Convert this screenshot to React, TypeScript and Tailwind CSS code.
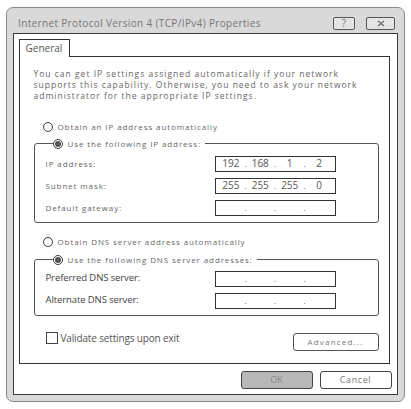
import React from 'react'

const spaced = "font-['Open_Sans','Liberation_Sans',sans-serif]"

// radio button, filled or empty
function Radio({ checked }: { checked?: boolean }) {
  return (
    <span className="flex h-[10px] w-[10px] shrink-0 items-center justify-center rounded-full border border-[#3a3a3a] bg-white">
      {checked && <span className="h-[6px] w-[6px] rounded-full bg-[#555]" />}
    </span>
  )
}

// ip address box with four segments
function IpBox({ parts = ['', '', '', ''] }: { parts?: string[] }) {
  return (
    <div className="flex h-[16px] w-[121px] items-center border border-[#333] bg-white px-[3px] font-['Open_Sans',sans-serif] text-[10px] text-[#555]">
      {parts.map((p, i) => (
        <React.Fragment key={i}>
          {i > 0 && <span className="w-[5px] text-center text-[8px]">.</span>}
          <span className="w-[25px] text-center">{p}</span>
        </React.Fragment>
      ))}
    </div>
  )
}

function Row({ label, parts, plain }: { label: string; parts?: string[]; plain?: boolean }) {
  return (
    <div className="flex h-[16px] items-center justify-between pr-[31px]">
      <span
        className={
          plain
            ? "font-['Open_Sans',sans-serif] text-[9.5px] tracking-[-0.1px] text-[#444]"
            : `${spaced} text-[8px] tracking-[0.9px] text-[#666]`
        }
      >
        {label}
      </span>
      <IpBox parts={parts} />
    </div>
  )
}

export default function App() {
  return (
    <div className="h-[409px] w-[411px] bg-white pl-[6px] pt-[7px]">
      <div className="flex h-[395px] w-[399px] flex-col rounded-[7px] border border-[#8a8a8a] bg-[#d9d9d9] px-[6px] pb-[6px]">
        {/* title bar */}
        <div className="flex h-[25px] shrink-0 items-center justify-between pl-[5px] pr-[3px] pt-[5px]">
          <span className={`${spaced} text-[10px] tracking-[0.35px] text-[#777]`}>
            Internet Protocol Version 4 (TCP/IPv4) Properties
          </span>
          <div className="flex gap-[11px]">
            <span className="flex h-[13px] w-[22px] items-center justify-center rounded-[2px] border border-[#555] bg-[#e4e4e4] font-['Open_Sans',sans-serif] text-[10px] leading-none text-[#777]">
              ?
            </span>
            <span className="flex h-[13px] w-[29px] items-center justify-center rounded-[2px] border border-[#555] bg-[#e4e4e4]">
              <svg width="8" height="7" viewBox="0 0 8 7">
                <path d="M1 1L7 6M7 1L1 6" stroke="#666" strokeWidth="1.1" />
              </svg>
            </span>
          </div>
        </div>

        {/* client area */}
        <div className="flex flex-1 flex-col border-[1.5px] border-[#3a3a3a] bg-white px-[4.5px] pt-[4.5px]">
          <div className="relative z-10 -mb-px flex h-[18px] w-[51px] items-center border border-b-0 border-[#333] bg-white pl-[6px] font-['Open_Sans',sans-serif] text-[10px] text-[#555]">
            General
          </div>
          <div className="flex h-[308px] w-[371px] flex-col border border-[#333] pl-[14px] pr-[10px]">
            <p className={`${spaced} pt-[11px] text-[8.5px] leading-[11px] tracking-[1px] text-[#666]`}>
              <span className="block whitespace-nowrap">You can get IP settings assigned automatically if your network</span>
              <span className="block whitespace-nowrap">supports this capability. Otherwise, you need to ask your network</span>
              <span className="block whitespace-nowrap">administrator for the appropriate IP settings.</span>
            </p>

            <label className={`${spaced} mt-[20px] flex h-[12px] items-center gap-[5px] pl-[9px] text-[8px] tracking-[0.9px] text-[#666]`}>
              <Radio />
              Obtain an IP address automatically
            </label>

            <fieldset className="mt-[5px] rounded-[3px] border border-[#555] px-[11px] pb-[6px]">
              <legend className={`${spaced} ml-[7px] flex h-[12px] items-center gap-[5px] pr-[4px] text-[8px] tracking-[0.9px] text-[#666]`}>
                <Radio checked />
                Use the following IP address:
              </legend>
              <div className="flex flex-col gap-[6px] pt-[6px]">
                <Row label="IP address:" parts={['192', '168', '1', '2']} />
                <Row label="Subnet mask:" parts={['255', '255', '255', '0']} />
                <Row label="Default gateway:" />
              </div>
            </fieldset>

            <label className={`${spaced} mt-[13px] flex h-[12px] items-center gap-[5px] pl-[9px] text-[8px] tracking-[0.9px] text-[#666]`}>
              <Radio />
              Obtain DNS server address automatically
            </label>

            <fieldset className="mt-[6px] rounded-[3px] border border-[#555] px-[11px] pb-[6px]">
              <legend className={`${spaced} ml-[7px] flex h-[12px] items-center gap-[5px] pr-[4px] text-[8px] tracking-[0.9px] text-[#666]`}>
                <Radio checked />
                Use the following DNS server addresses:
              </legend>
              <div className="flex flex-col gap-[6px] pt-[5px]">
                <Row label="Preferred DNS server:" plain />
                <Row label="Alternate DNS server:" plain />
              </div>
            </fieldset>

            <div className="mt-[15px] flex items-start justify-between pl-[12px]">
              <label className="flex items-center gap-[3px] font-['Open_Sans',sans-serif] text-[10px] tracking-[-0.15px] text-[#555]">
                <span className="h-[12px] w-[12px] border border-[#444] bg-white" />
                Validate settings upon exit
              </label>
              <button className={`${spaced} mt-[2px] h-[18px] w-[86px] rounded-[3px] border border-[#555] bg-white text-[8px] tracking-[1.2px] text-[#777]`}>
                Advanced...
              </button>
            </div>
          </div>

          <div className="mt-[7px] flex justify-end gap-[7px] pr-[1px]">
            <button className="h-[18px] w-[72px] rounded-[3px] border border-[#444] bg-[#b8b8b8] font-['Open_Sans',sans-serif] text-[9px] text-[#888]">
              OK
            </button>
            <button className={`${spaced} h-[18px] w-[72px] rounded-[3px] border border-[#444] bg-white text-[9px] tracking-[0.6px] text-[#777]`}>
              Cancel
            </button>
          </div>
        </div>
      </div>
    </div>
  )
}
